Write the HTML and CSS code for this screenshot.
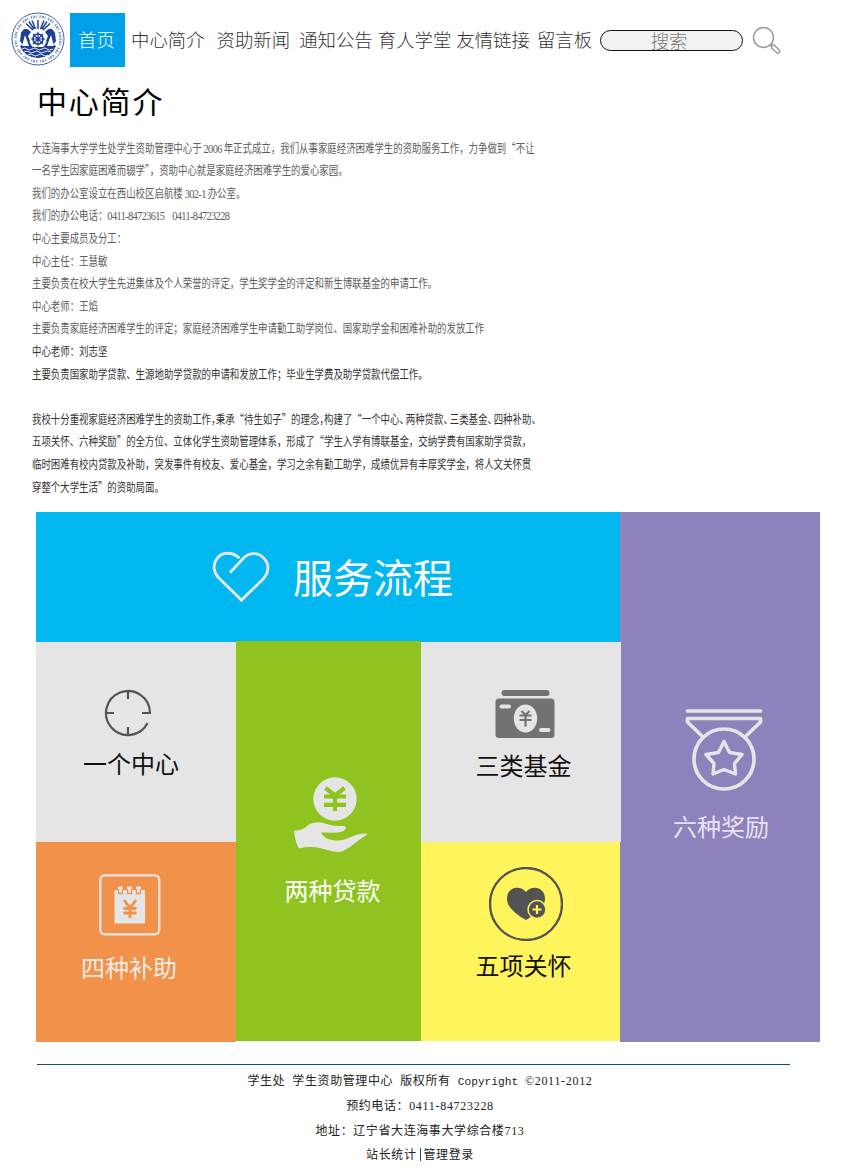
FILE: index.html
```
<!DOCTYPE html>
<html lang="zh-CN">
<head>
<meta charset="utf-8">
<title>中心简介</title>
<link rel="stylesheet" href="styles.css">
</head>
<body>
<header class="header">
  <svg class="emblem" viewBox="0 0 54 54">
    <circle cx="27" cy="27" r="26" fill="#fff" stroke="#4562a9" stroke-width="1"/>
    <circle cx="27" cy="27" r="22.500" fill="none" stroke="#8095c8" stroke-width="2.400" stroke-dasharray="1.500 1 2 .8 1 2.600"/>
    <path d="M27 17V8M24.500 17L21 8.500M29.500 17L33 8.500M22 18L15 11.500M32 18L39 11.500M23 17L18 9.500M31 17L36 9.500" stroke="#1d3f95" stroke-width="1.500"/>
    <path d="M10 21Q14 13 20 20L17 24L19 29L12 33L9 29ZM44 21Q40 13 34 20L37 24L35 29L42 33L45 29Z" fill="#1d3f95"/>
    <path d="M9 34L14 31L15 22L20 33L22 35L32 35L34 33L39 22L40 31L45 34Q41 45 27 46Q13 45 9 34Z" fill="#1d3f95"/>
    <path d="M14 23L18 34H11ZM40 23L36 34H43Z" fill="#fff"/>
    <circle cx="27" cy="27" r="7" fill="#fff"/>
    <circle cx="27" cy="27" r="5" fill="none" stroke="#1d3f95" stroke-width="1.700"/>
    <path d="M27 20V34M20 27H34M22 22L32 32M32 22L22 32" stroke="#1d3f95" stroke-width="1.200"/>
    <path d="M11 37q3-2 5 0t5 0t5 0t5 0t5 0t6 0M13 40q3-2 5 0t5 0t5 0t5 0t7 0M17 43q3-2 5 0t5 0t5 0t5 0" fill="none" stroke="#fff" stroke-width=".9"/>
  </svg>
  <nav class="nav">
    <a class="home">首页</a>
    <a class="n-about">中心简介</a>
    <a class="n-news">资助新闻</a>
    <a class="n-notice">通知公告</a>
    <a class="n-school">育人学堂</a>
    <a class="n-links">友情链接</a>
    <a class="n-board">留言板</a>
  </nav>
  <div class="search">搜索</div>
  <svg class="glass" viewBox="0 0 30 30" fill="none" stroke="#999">
    <circle cx="11.500" cy="11.500" r="10" stroke-width="1.500"/>
    <path d="M18.500 18.500L20.500 20.500" stroke-width="1.500"/>
    <rect x="-1.900" y="0" width="3.800" height="10" rx="1.500" transform="translate(20 19.500) rotate(-45)" stroke-width="1.400"/>
  </svg>
</header>

<main>
  <h1 class="title">中心简介</h1>
  <div class="intro">
    <p>大连海事大学学生处学生资助管理中心于<i class="num"> 2006 </i>年正式成立，我们从事家庭经济困难学生的资助服务工作，力争做到“不让</p>
    <p>一名学生因家庭困难而辍学”，资助中心就是家庭经济困难学生的爱心家园。</p>
    <p>我们的办公室设立在西山校区启航楼<i class="num"> 302-1 </i>办公室。</p>
    <p>我们的办公电话：<i class="num">0411-84723615 &nbsp; &nbsp;0411-84723228</i></p>
    <p>中心主要成员及分工：</p>
    <p>中心主任：王慧敏</p>
    <p>主要负责在校大学生先进集体及个人荣誉的评定，学生奖学金的评定和新生博联基金的申请工作。</p>
    <p>中心老师：王焰</p>
    <p>主要负责家庭经济困难学生的评定；家庭经济困难学生申请勤工助学岗位、国家助学金和困难补助的发放工作</p>
    <p class="dark">中心老师：刘志坚</p>
    <p class="dark">主要负责国家助学贷款、生源地助学贷款的申请和发放工作；毕业生学费及助学贷款代偿工作。</p>
    <p>&nbsp;</p>
    <p class="dark">我校十分重视家庭经济困难学生的资助工作<i class="half">，</i>秉承“待生如子”的理念<i class="half">，</i>构建了“一个中心<i class="tight">、</i>两种贷款<i class="tight">、</i>三类基金<i class="tight">、</i>四种补助<i class="tight">、</i></p>
    <p class="dark">五项关怀、六种奖励”的全方位、立体化学生资助管理体系，形成了“学生入学有博联基金，交纳学费有国家助学贷款，</p>
    <p class="dark">临时困难有校内贷款及补助，突发事件有校友、爱心基金，学习之余有勤工助学，成绩优异有丰厚奖学金，将人文关怀贯</p>
    <p class="dark">穿整个大学生活”的资助局面。</p>
  </div>

  <section class="tiles">
    <div class="tile flow">
      <svg width="60" height="54" viewBox="-1 -1 62 56" fill="none" stroke="#e5e5e5" stroke-width="3" stroke-linejoin="miter">
        <path d="M28.500 7.500C21 .5 10 .5 5 8C0 15 2 23 7 28L30.500 51L53 29C58 24 60 15 55 9C49 1 39 1 33 7L18.500 22.500"/>
      </svg>
      <span>服务流程</span>
    </div>
    <div class="tile center">
      <svg width="48" height="48" viewBox="0 0 48 48" fill="none" stroke="#535353" stroke-width="2.200">
        <path d="M43.600 34A22 22 0 1 1 46 24H38M24 2V10M2 24H10M24 46V38"/>
      </svg>
      <span>一个中心</span>
    </div>
    <div class="tile loan">
      <svg width="76" height="76" viewBox="0 0 76 76">
        <circle cx="42" cy="22" r="21.700" fill="#e5e5e5"/>
        <path d="M32.500 11L42 18.500L51.500 11M42 18V34M31 19.500H53M31 27.800H53" fill="none" stroke="#8fc31f" stroke-width="4.200"/>
        <path d="M1 53.500Q9 54 14 49C19 45 25 44.500 32 46.500C39 49 45 49 51 49C55 50 52 54 48 55C43 56 35 55.500 28 55.500C31 62 39 63.500 46 63.500C55 63 62 56 73 56.500C75 57 74 58 72 59C64 64 57 71 49 74.500C42 76 35 73 27 71Q17 69 6 71.500Q2 65 1 53.500Z" fill="#e5e5e5"/>
      </svg>
      <span>两种贷款</span>
    </div>
    <div class="tile fund">
      <svg width="60" height="50" viewBox="0 0 60 50">
        <rect x="6.500" y="1" width="48" height="6" rx="3" fill="#727272"/>
        <rect x="0.500" y="9.500" width="59" height="39.500" rx="3.500" fill="#727272"/>
        <rect x="4.500" y="15.500" width="11.500" height="4" rx="2" fill="#e5e5e5"/>
        <rect x="44" y="39" width="11.500" height="4" rx="2" fill="#e5e5e5"/>
        <ellipse cx="30.500" cy="29.500" rx="11.700" ry="14" fill="#e5e5e5"/>
        <path d="M26.500 22L30.500 26L34.500 22M30.500 26V37.500M24.500 26.500H36.500M24.500 31H36.500" fill="none" stroke="#727272" stroke-width="2.200"/>
      </svg>
      <span>三类基金</span>
    </div>
    <div class="tile award">
      <svg width="78" height="84" viewBox="0 0 78 84" fill="none" stroke="#e5e5e5" stroke-width="3.700" stroke-linejoin="round" stroke-linecap="round">
        <path d="M2.500 3H75.500M17 28L2.500 14V10.500H75.500V14L61 28"/>
        <circle cx="39" cy="51" r="30"/>
        <path d="M39 33.500L44.500 44.500L57 46.500L49.500 55.500L50.500 66L39 61.500L28 66L29 55.500L21 46.500L33.500 44.500Z" stroke-width="3.400"/>
      </svg>
      <span>六种奖励</span>
    </div>
    <div class="tile aid">
      <svg width="62" height="62" viewBox="0 0 62 62" fill="none">
        <rect x="1.300" y="1.300" width="59" height="59" rx="4.500" stroke="#e5e5e5" stroke-width="2.300"/>
        <path d="M15.500 16H19V12.500H24V16H28V12.500H33V16H37V12.500H42V16H46V49.500H15.500Z" fill="#e5e5e5"/>
        <path d="M19.500 15V19.500H23.500V15M28.500 15V19.500H32.500V15M37.500 15V19.500H41.500V15" stroke="#f2914a" stroke-width="1.300"/>
        <path d="M25 26L31 34L37 26M31 34V44M24.500 34.500H37.500M24.500 39H37.500" stroke="#f2914a" stroke-width="2.800"/>
      </svg>
      <span>四种补助</span>
    </div>
    <div class="tile care">
      <svg width="74" height="74" viewBox="0 0 74 74">
        <circle cx="37" cy="37" r="36" fill="none" stroke="#535353" stroke-width="2.300"/>
        <path d="M37 25C32 18 18 19 18 32C18 40 27 47 37 53C47 47 56 40 56 32C56 19 42 18 37 25Z" fill="#535353"/>
        <circle cx="48" cy="42.500" r="9.700" fill="#fff45c"/>
        <circle cx="48" cy="42.500" r="8.200" fill="#535353"/>
        <path d="M48 38V47M43.500 42.500H52.500" stroke="#fff45c" stroke-width="2.200"/>
      </svg>
      <span>五项关怀</span>
    </div>
  </section>
</main>

<footer class="footer">
  <p>学生处<i> </i>学生资助管理中心<i> </i>版权所有<i> </i><i class="mono">Copyright </i><i>©2011-2012</i></p>
  <p>预约电话：<i>0411-84723228</i></p>
  <p>地址：辽宁省大连海事大学综合楼<i>713</i></p>
  <p>站长统计<b class="bar"></b>管理登录</p>
</footer>
</body>
</html>
```
FILE: styles.css
```
* { box-sizing: border-box; }
body {
  margin: 0;
  width: 852px;
  height: 1174px;
  overflow: hidden;
  background: #fff;
  font-family: "Noto Sans CJK SC", sans-serif;
}
i { font-style: normal; line-height: 0; }
svg { display: block; flex: none; }
p { margin: 0; }

.header {
  display: flex;
  height: 82px;
  padding: 12px 0 0 11px;
}
.emblem { width: 54px; height: 54px; }
.nav {
  display: flex;
  margin: 1px 0 0 5px;
  font-size: 18.4px;
  font-weight: 300;
  line-height: 53px;
  color: #333;
  white-space: nowrap;
}
.home {
  width: 55px;
  height: 54px;
  padding-left: 8px;
  background: #00a0e9;
  color: #fff;
}
.n-about { margin-left: 6px; }
.n-news { margin-left: 12px; }
.n-notice { margin-left: 9px; }
.n-school { margin-left: 5px; line-height: 52px; }
.n-links { margin-left: 5px; }
.n-board { margin-left: 7px; line-height: 52px; }
.search {
  width: 143px;
  height: 21px;
  margin: 18px 0 0 8px;
  border: 1px solid #111;
  border-radius: 11px;
  background: #f2f2f2;
  padding-right: 5px;
  color: #777;
  font-size: 18.4px;
  font-weight: 300;
  line-height: 19px;
  text-align: center;
}
.glass { width: 30px; height: 30px; margin: 14px 0 0 9px; }

.title {
  margin: 0;
  height: 54.7px;
  padding-left: 37px;
  font-size: 30px;
  font-weight: 400;
  letter-spacing: 1.8px;
  line-height: 37px;
  color: #000;
}
.intro {
  width: 700px;
  height: 375.3px;
  margin-left: 32px;
  transform: scaleX(.785);
  transform-origin: 0 0;
  font-size: 12px;
  font-weight: 400;
  line-height: 22.6px;
  color: #5c5c5c;
  white-space: nowrap;
}
.intro p { height: 22.6px; }
.dark { color: #333; }
.num { font-family: "Liberation Serif", serif; font-size: 13.2px; letter-spacing: -.8px; }
.half { letter-spacing: -6px; }
.tight { letter-spacing: -4px; }

.tiles {
  display: grid;
  grid-template-columns: 200px 185px 199px 200px;
  grid-template-rows: 130px 200px 200px;
  grid-template-areas:
    "flow flow flow award"
    "center loan fund award"
    "aid loan care award";
  width: 784px;
  margin-left: 36px;
}
.tile {
  display: flex;
  flex-direction: column;
  align-items: center;
  font-size: 24px;
  line-height: 36px;
  white-space: nowrap;
}
.flow {
  grid-area: flow;
  flex-direction: row;
  align-items: flex-start;
  padding: 38px 0 0 175px;
  gap: 22px;
  background: #00b7f0;
  color: #fff;
  font-size: 40px;
  line-height: 52px;
}
.center { grid-area: center; background: #e5e5e5; color: #111; padding: 47px 16px 0 0; gap: 8px; }
.center span { margin-left: 6px; }
.loan { grid-area: loan; background: #8fc31f; color: #fff; padding: 135px 0 0 4px; gap: 19px; margin: -1px 0 1px; padding-top: 136px; }
.loan span { margin-left: 4px; }
.fund { grid-area: fund; background: #e5e5e5; color: #111; padding: 47px 0 0 8px; gap: 8px; margin-right: -1px; z-index: 1; }
.fund span { margin-right: 3px; }
.award { grid-area: award; background: #8f82bc; color: #e8e3f0; padding: 196px 0 0 7px; gap: 16px; }
.award span { margin-right: 5px; }
.aid { grid-area: aid; background: #f2914a; color: #eeeae8; padding: 32px 13px 0 0; gap: 13px; }
.aid span { margin-right: 1px; }
.care { grid-area: care; background: #fff45c; color: #111; padding: 25px 0 0 11px; gap: 6px; margin-bottom: 1px; }
.care span { margin-right: 5px; }

.footer {
  width: 753px;
  margin: 22px 0 0 37px;
  padding: 3px 0 0 13px;
  border-top: 1px solid #005878;
  font-size: 12px;
  letter-spacing: .6px;
  line-height: 24.8px;
  text-align: center;
  color: #222;
}
.footer p { height: 24.8px; }
.footer i { font-family: "Liberation Serif", serif; letter-spacing: .7px; word-spacing: 3.4px; white-space: pre; }
.footer i.mono { font-family: "Liberation Mono", monospace; font-size: 11.2px; letter-spacing: 0; word-spacing: 0; }
.bar {
  display: inline-block;
  width: 1px;
  height: 13px;
  margin: 0 3px;
  background: #005878;
  vertical-align: -2px;
}
```
